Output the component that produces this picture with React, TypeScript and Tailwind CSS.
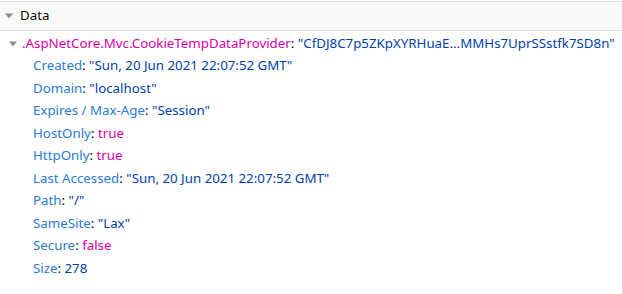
import React from "react"

type Val = { text: string; kind: "str" | "bool" | "num" }

const rows: { key: string; value: Val }[] = [
  { key: "Created", value: { text: '"Sun, 20 Jun 2021 22:07:52 GMT"', kind: "str" } },
  { key: "Domain", value: { text: '"localhost"', kind: "str" } },
  { key: "Expires / Max-Age", value: { text: '"Session"', kind: "str" } },
  { key: "HostOnly", value: { text: "true", kind: "bool" } },
  { key: "HttpOnly", value: { text: "true", kind: "bool" } },
  { key: "Last Accessed", value: { text: '"Sun, 20 Jun 2021 22:07:52 GMT"', kind: "str" } },
  { key: "Path", value: { text: '"/"', kind: "str" } },
  { key: "SameSite", value: { text: '"Lax"', kind: "str" } },
  { key: "Secure", value: { text: "false", kind: "bool" } },
  { key: "Size", value: { text: "278", kind: "num" } },
]

function Twisty({ className }: { className?: string }) {
  return (
    <svg width="10" height="10" viewBox="0 0 10 10" className={className}>
      <path d="M1 2.5 L9 2.5 L5 7.5 Z" fill="#8c8c8c" />
    </svg>
  )
}

export default function App() {
  return (
    <div
      className="h-[294px] w-[622px] bg-white text-[13.3px]"
      style={{ fontFamily: '"Noto Sans", "Open Sans", sans-serif' }}
    >
      {/* Section header */}
      <div className="mt-px flex h-[30px] items-center gap-[6px] border-y border-[#e0e0e2] bg-[#f9f9fa] pl-[4px] text-[#0c0c0d]">
        <Twisty />
        <span>Data</span>
      </div>

      {/* Cookie tree */}
      <div className="pt-[1px]">
        <div className="flex h-[23px] items-center whitespace-nowrap pl-[8px]">
          <Twisty className="mr-[4px]" />
          <span className="text-[#dd00a9]">.AspNetCore.Mvc.CookieTempDataProvider</span>
          <span className="text-[#0c0c0d]">:&nbsp;</span>
          <span className="text-[#003eaa]">"CfDJ8C7p5ZKpXYRHuaE...MMHs7UprSSstfk7SD8n"</span>
        </div>
        {rows.map((row) => (
          <div key={row.key} className="flex h-[22.5px] items-center whitespace-nowrap pl-[33px]">
            <span className="text-[#2a7bd1]">{row.key}</span>
            <span className="text-[#0c0c0d]">:&nbsp;</span>
            <span className={row.value.kind === "bool" ? "text-[#dd00a9]" : "text-[#003eaa]"}>
              {row.value.text}
            </span>
          </div>
        ))}
      </div>
    </div>
  )
}
